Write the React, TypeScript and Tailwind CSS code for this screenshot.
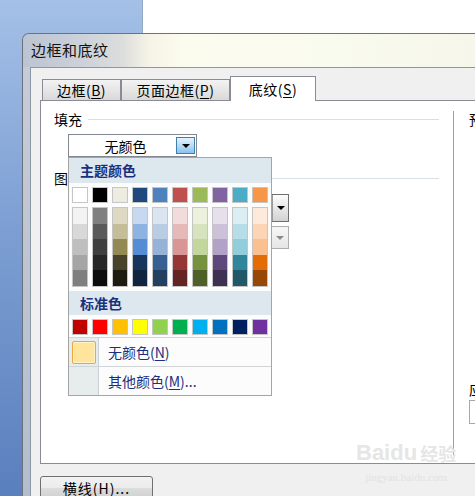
import React from "react";

const themeTop = ["#FFFFFF", "#000000", "#EEECE1", "#1F497D", "#4F81BD", "#C0504D", "#9BBB59", "#8064A2", "#4BACC6", "#F79646"];
const shades: string[][] = [
  ["#F2F2F2", "#D8D8D8", "#BFBFBF", "#A5A5A5", "#7F7F7F"],
  ["#7F7F7F", "#595959", "#3F3F3F", "#262626", "#0C0C0C"],
  ["#DDD9C3", "#C4BD97", "#938953", "#494429", "#1D1B10"],
  ["#C6D9F0", "#8DB3E2", "#548DD4", "#17365D", "#0F243E"],
  ["#DBE5F1", "#B8CCE4", "#95B3D7", "#366092", "#244061"],
  ["#F2DCDB", "#E5B9B7", "#D99694", "#953734", "#632423"],
  ["#EBF1DD", "#D7E3BC", "#C3D69B", "#76923C", "#4F6128"],
  ["#E5E0EC", "#CCC1D9", "#B2A2C7", "#5F497A", "#3F3151"],
  ["#DBEEF3", "#B7DDE8", "#92CDDC", "#31859B", "#205867"],
  ["#FDEADA", "#FBD5B5", "#FAC08F", "#E36C09", "#974806"],
];
const standard = ["#C00000", "#FF0000", "#FFC000", "#FFFF00", "#92D050", "#00B050", "#00B0F0", "#0070C0", "#002060", "#7030A0"];

function Swatch({ c }: { c: string }) {
  return (
    <div className="w-[16px] h-[16px] border border-[#c5c5c5] shrink-0">
      <div className="w-full h-full" style={{ backgroundColor: c }} />
    </div>
  );
}

function Tab({ label, u, w, active }: { label: string; u: string; w: string; active?: boolean }) {
  return (
    <div
      className={
        active
          ? `${w} shrink-0 h-[25px] -mb-px z-10 bg-white border-x border-t border-[#898c95] flex items-center justify-center text-[14px] text-black`
          : `${w} shrink-0 h-[21px] bg-[linear-gradient(to_bottom,#f3f3f3,#e6e6e6_50%,#d9d9d9)] border-x border-t border-[#898c95] flex items-center justify-center text-[14px] text-black`
      }
    >
      <span className="tracking-[0.5px]">
        {label}(<span className="underline underline-offset-2">{u}</span>)
      </span>
    </div>
  );
}

export default function App() {
  return (
    <div className="relative w-[475px] h-[496px] overflow-hidden bg-[linear-gradient(to_bottom,#a4c0e7,#7d9fd3_45%,#5a7fbd)] font-['Noto_Sans_CJK_SC',sans-serif]">
      {/* desktop top band */}
      <div className="flex h-[33px]">
        <div className="w-[142px] shrink-0" />
        <div className="flex-1 bg-white border-l border-[#94a8c4]" />
      </div>

      {/* dialog */}
      <div className="ml-[22px] h-[463px] flex flex-col rounded-tl-[7px] border-l border-t border-[#6a727d] overflow-hidden">
        <div className="h-[33px] shrink-0 flex items-center pl-[8px] bg-[linear-gradient(to_right,#bcc4d2,#cdd2da_60px,#dcdedc_100px,#f4f3e6_125px,#fbfbee_160px,#fafbef_300px,#f6f7ea)]">
          <span className="text-[15px] text-[#111] tracking-[0.5px]">边框和底纹</span>
        </div>
        <div className="flex flex-1 min-h-0">
          <div className="w-[7px] shrink-0 bg-[linear-gradient(to_bottom,#c6ccd7,#b3bdcc)]" />
          <div className="flex-1 min-w-0 bg-[#f0f0f0] border-l border-t border-[#8d96a4] flex flex-col pl-[9px] pt-[8px] overflow-hidden">
            {/* tabs */}
            <div className="flex items-end h-[24px] shrink-0 pl-[2px]">
              <Tab label="边框" u="B" w="w-[79px]" />
              <Tab label="页面边框" u="P" w="w-[109px]" />
              <Tab label="底纹" u="S" w="w-[86px]" active />
            </div>
            {/* panel */}
            <div className="h-[364px] shrink-0 bg-white border border-r-0 border-[#898c95] flex pt-[10px] pl-[13px] pb-[7px] text-[14px] text-black">
              <div className="w-[385px] flex flex-col shrink-0">
                <div className="flex items-center h-[16px] shrink-0">
                  <span className="leading-[16px]">填充</span>
                  <div className="flex-1 h-px bg-[#d5dfe5] ml-[6px]" />
                </div>
                <div className="mt-[7px] ml-[14px] w-[129px] h-[23px] shrink-0 border border-[#828790] bg-white flex items-center">
                  <div className="flex-1 text-center leading-[18px] pl-[6px]">无颜色</div>
                  <div className="w-[19px] h-[17px] mr-[1px] border border-[#3c7fb1] bg-[linear-gradient(to_bottom,#e5f3fd,#b9dcf6_50%,#8ac2ee)] flex items-center justify-center">
                    <div className="w-0 h-0 border-x-[4px] border-x-transparent border-t-[4px] border-t-black" />
                  </div>
                </div>
                <div className="flex items-center h-[16px] mt-[13px] shrink-0">
                  <span className="leading-[16px]">图案</span>
                  <div className="flex-1 h-px bg-[#d5dfe5] ml-[6px]" />
                </div>
                <div className="mt-[8px] ml-[32px] w-[203px] h-[28px] shrink-0 border border-[#6f6f6f] bg-white flex justify-end">
                  <div className="w-[16px] h-full border-l border-[#9a9a9a] bg-[linear-gradient(to_bottom,#fdfdfd,#e8e8e8_50%,#d2d2d2)] flex items-center justify-center">
                    <div className="w-0 h-0 border-x-[4px] border-x-transparent border-t-[4px] border-t-black" />
                  </div>
                </div>
                <div className="mt-[4px] ml-[32px] w-[203px] h-[23px] shrink-0 border border-[#adadad] bg-[#f4f4f4] flex justify-end">
                  <div className="w-[16px] h-full bg-[linear-gradient(to_bottom,#f6f6f6,#e6e6e6)] flex items-center justify-center">
                    <div className="w-0 h-0 border-x-[4px] border-x-transparent border-t-[4px] border-t-[#8a8a8a]" />
                  </div>
                </div>
              </div>
              <div className="w-px bg-[#a0a0a0] ml-[14px] shrink-0" />
              <div className="ml-[15px] flex flex-col shrink-0 w-[80px]">
                <span className="leading-[16px]">预览</span>
                <span className="leading-[16px] mt-[254px]">应用于</span>
                <div className="mt-[3px] h-[24px] w-[80px] border border-[#a8a8a8] bg-white" />
              </div>
            </div>
            {/* bottom button */}
            <div className="mt-[12px] flex shrink-0">
              <div className="w-[113px] h-[24px] rounded-t-[3px] border border-[#707070] bg-[linear-gradient(to_bottom,#f2f2f2,#ebebeb_50%,#dddddd_50%,#cfcfcf)] flex items-center justify-center text-[14px] text-black">
                <span className="tracking-[1px]">
                  横线(<span className="underline underline-offset-2">H</span>)...
                </span>
              </div>
            </div>
          </div>
        </div>
      </div>

      {/* color popup */}
      <div className="absolute left-[68px] top-[157px] w-[204px] border border-[#a5a5a5] bg-[#fcfcfc] flex flex-col">
        <div className="h-[25px] bg-[#dde7ee] flex items-center pl-[11px] text-[14px] font-bold text-[#19307f]">主题颜色</div>
        <div className="pt-[4px] pl-[3px] flex gap-[4px]">
          {themeTop.map((c) => (
            <Swatch key={c} c={c} />
          ))}
        </div>
        <div className="mt-[4px] pl-[3px] flex gap-[4px]">
          {shades.map((col, i) => (
            <div key={i} className="w-[16px] h-[80px] border border-[#c5c5c5] flex flex-col">
              {col.map((c) => (
                <div key={c} className="flex-1" style={{ backgroundColor: c }} />
              ))}
            </div>
          ))}
        </div>
        <div className="mt-[4px] h-[24px] bg-[#dde7ee] flex items-center pl-[11px] text-[14px] font-bold text-[#19307f]">标准色</div>
        <div className="pt-[4px] pl-[3px] flex gap-[4px]">
          {standard.map((c) => (
            <Swatch key={c} c={c} />
          ))}
        </div>
        <div className="mt-[2px] border-t border-[#d0d4d6] h-[29px] flex">
          <div className="w-[30px] border-r border-[#c9cfd2] bg-[#e7ecec] flex items-start pl-[3px] pt-[3px]">
            <div className="w-[24px] h-[23px] rounded-[2px] border border-[#f0a33a] bg-[#ffe49c] shadow-[inset_0_0_0_1px_#fff1c8]" />
          </div>
          <div className="flex-1 flex items-center pl-[9px] text-[14px] text-[#1c2e7e]">
            无颜色(<span className="underline underline-offset-2">N</span>)
          </div>
        </div>
        <div className="border-t border-[#d0d4d6] h-[29px] flex">
          <div className="w-[30px] border-r border-[#c9cfd2] bg-[#e7ecec]" />
          <div className="flex-1 flex items-center pl-[9px] text-[14px] text-[#1c2e7e]">
            其他颜色(<span className="underline underline-offset-2">M</span>)...
          </div>
        </div>
      </div>

      {/* watermark */}
      <div className="absolute left-[356px] top-[441px] flex flex-col items-center pointer-events-none">
        <div className="flex items-end text-[22px] font-bold leading-[24px] text-[#e6e6e6] font-['Liberation_Sans',sans-serif]">
          <span>Bai</span>
          <span>du</span>
          <span className="text-[18px] ml-[3px] font-['Noto_Sans_CJK_SC',sans-serif]">经验</span>
        </div>
        <div className="text-[11px] leading-[12px] mt-[6px] text-[#e2e2e2] font-['Liberation_Serif',serif]">jingyan.baidu.com</div>
      </div>
    </div>
  );
}
